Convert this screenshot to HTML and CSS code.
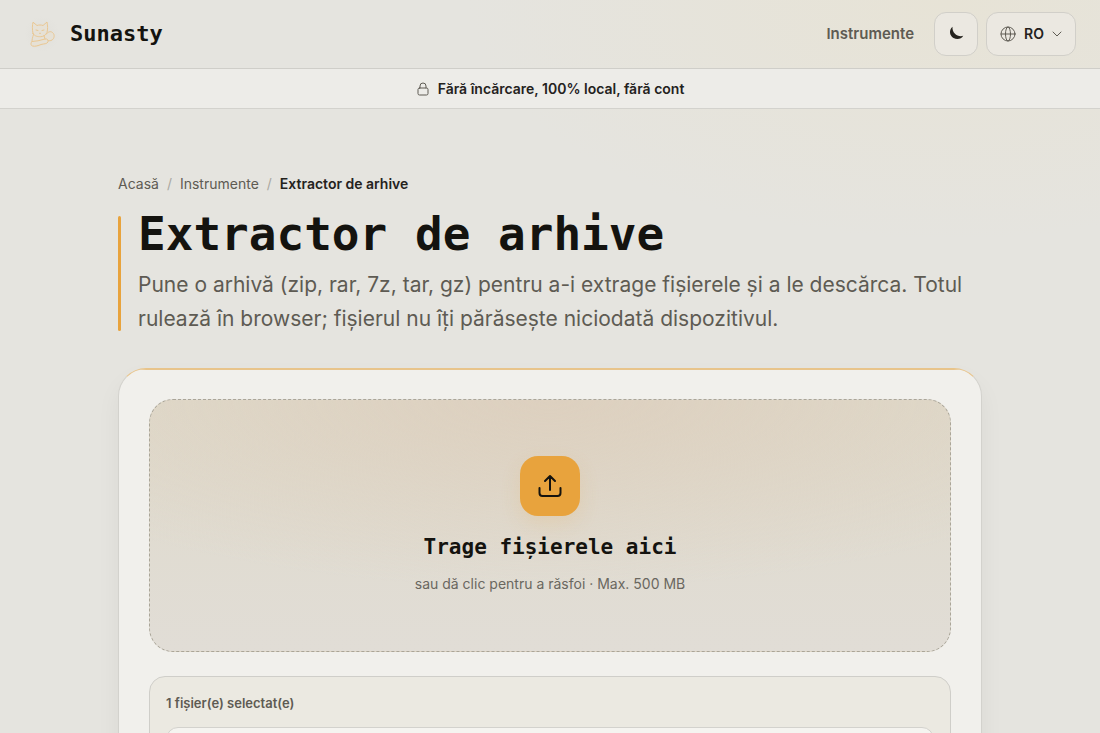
FILE: index.html
```html
<!DOCTYPE html>
<html lang="ro">
<head>
    <meta charset="UTF-8">
    <meta name="viewport" content="width=device-width, initial-scale=1.0">
    <title>Extractor de arhive</title>
    <link rel="stylesheet" href="styles.css">
</head>
<body>
    <header class="header">
        <a class="brand" href="#">
            <svg class="brand-logo" viewBox="0 0 36 36" aria-hidden="true">
                <path class="brand-fill" d="M9 17.500C8 13 8.300 9 9 6.200l4 3.300c2-.7 4-.7 6 0l4-3.500c.8 4 .8 7 0 10.500l5 0c3 2 2.500 6 0 8l-4.500 1c0 2.500-2 3-5 3.500-3 1-6 3-9 2-2-.5-2-3-.5-4.500 0-2 .5-4 1.500-7z"/>
                <path d="M9 17.500C8 13 8.300 9 9 6.200l4 3.300c2-.7 4-.7 6 0l4-3.500c.8 4 .8 7 0 10.500-1.500 3-4 4.200-6.500 4.200S10.500 20.500 9 17.500z"/>
                <path d="M12 14l2 .5M20 14l-2 .5M15.500 17.300h1"/>
                <path d="M9.500 18.500c-1 3-1.500 5-1.500 7-1.500 1.500-1.500 4 .5 4.500 2.500.8 6-.5 8.500-1.500 3-.8 6-.5 7-2.500.8-2-1-3.500-3-3l-7 1.800c-2 .5-4 .2-6 .7"/>
                <path d="M22.500 18c1-2 4-3.200 6-1.500 2.500 2 2 6-.5 7.500-1.500 1-3 .8-4 .5M20 19.500l1 3.500"/>
            </svg>
            <span class="brand-name">Sunasty</span>
        </a>
        <nav class="nav">
            <a class="nav-link" href="#">Instrumente</a>
            <div class="nav-actions">
                <button class="theme-button" type="button" aria-label="Mod întunecat">
                    <svg class="icon-moon" viewBox="0 0 16 16" aria-hidden="true">
                        <path d="M4.500 .8C.8 4 1.300 9.500 5.500 12c3.500 2 8 1 9.700-2.200C10 11.300 3.800 7.500 4.500 .8z"/>
                    </svg>
                </button>
                <label class="language">
                    <svg class="icon-globe" viewBox="0 0 16 16" aria-hidden="true">
                        <circle cx="8" cy="8" r="7"/>
                        <ellipse cx="8" cy="8" rx="2.500" ry="7"/>
                        <path d="M1 8h14"/>
                    </svg>
                    <select class="language-select" aria-label="Limbă">
                        <option selected>RO</option>
                    </select>
                    <svg class="icon-chevron" viewBox="0 0 10 10" aria-hidden="true">
                        <path d="M1 3l4 4 4-4"/>
                    </svg>
                </label>
            </div>
        </nav>
    </header>

    <div class="notice">
        <svg class="icon-lock" viewBox="0 0 14 14" aria-hidden="true">
            <rect x="2" y="6" width="10" height="7" rx="1.500"/>
            <path d="M4 6V4a3 3 0 0 1 6 0v2"/>
        </svg>
        <span>Fără încărcare, 100% local, fără cont</span>
    </div>

    <main class="main">
        <nav class="breadcrumb">
            <a href="#">Acasă</a>
            <span class="separator">/</span>
            <a href="#">Instrumente</a>
            <span class="separator">/</span>
            <span class="current">Extractor de arhive</span>
        </nav>

        <div class="hero">
            <h1 class="hero-title">Extractor de arhive</h1>
            <p class="hero-text">Pune o arhivă (zip, rar, 7z, tar, gz) pentru a-i extrage fișierele și a le descărca. Totul rulează în browser; fișierul nu îți părăsește niciodată dispozitivul.</p>
        </div>

        <section class="card">
            <label class="dropzone">
                <input class="dropzone-input" type="file">
                <span class="dropzone-icon">
                    <svg viewBox="0 0 24 24" aria-hidden="true">
                        <path d="M12 16V2M7 7l5-5 5 5M1.500 14v5a3 3 0 0 0 3 3h15a3 3 0 0 0 3-3v-5"/>
                    </svg>
                </span>
                <span class="dropzone-title">Trage fișierele aici</span>
                <span class="dropzone-text">sau dă clic pentru a răsfoi · Max. 500 MB</span>
            </label>

            <div class="files">
                <p class="files-title">1 fișier(e) selectat(e)</p>
                <ul class="files-list">
                    <li class="file"></li>
                </ul>
            </div>
        </section>
    </main>
</body>
</html>
```
FILE: styles.css
```css
* {
    box-sizing: border-box;
}

body {
    margin: 0;
    min-height: 100vh;
    font-family: Inter, "Liberation Sans", sans-serif;
    font-size: 14px;
    line-height: 20px;
    color: #24221d;
    background: radial-gradient(ellipse 480px 240px at 86% 0, #e7e3d6, rgba(231, 227, 214, 0)) no-repeat #e5e4df;
}

a {
    color: inherit;
    text-decoration: none;
}

svg {
    display: block;
    fill: none;
    stroke: currentColor;
    stroke-linecap: round;
    stroke-linejoin: round;
}

.header {
    display: flex;
    justify-content: space-between;
    align-items: center;
    padding: 12px 24px;
    border-bottom: 1px solid #cfcec9;
}

.brand {
    display: flex;
    align-items: center;
    gap: 10px;
}

.brand-logo {
    width: 36px;
    height: 36px;
    color: #e9c793;
    stroke-width: 1;
    border-radius: 50%;
    background: radial-gradient(circle, #e0dfda, rgba(224, 223, 218, 0) 70%);
}

.brand-fill {
    fill: #e6e1d6;
    stroke: none;
}

.brand-name {
    font-family: "DejaVu Sans Mono", monospace;
    font-size: 22px;
    font-weight: 700;
    line-height: 28px;
    color: #14130f;
}

.nav {
    display: flex;
    align-items: center;
    gap: 20px;
}

.nav-link {
    font-size: 15px;
    font-weight: 600;
    color: #5e5b53;
}

.nav-actions {
    display: flex;
    gap: 8px;
}

.theme-button,
.language {
    display: flex;
    justify-content: center;
    align-items: center;
    height: 44px;
    border: 1px solid #d1cfc9;
    border-radius: 12px;
    background-color: #ebe8e1;
    cursor: pointer;
}

.theme-button {
    width: 44px;
    padding: 0;
    color: #24221d;
}

.icon-moon {
    width: 16px;
    height: 16px;
    fill: currentColor;
    stroke: none;
}

.language {
    gap: 8px;
    padding: 0 13px;
}

.icon-globe {
    width: 16px;
    height: 16px;
    color: #5e5b53;
}

.language-select {
    appearance: none;
    padding: 0;
    border: 0;
    background: none;
    font-family: inherit;
    font-size: 14px;
    font-weight: 600;
    line-height: 20px;
    color: #24221d;
}

.icon-chevron {
    width: 10px;
    height: 10px;
    color: #5e5b53;
}

.notice {
    display: flex;
    justify-content: center;
    align-items: center;
    gap: 8px;
    height: 40px;
    border-bottom: 1px solid #d3d2cd;
    background-color: #edece8;
    font-weight: 600;
}

.icon-lock {
    width: 14px;
    height: 14px;
    color: #5e5b53;
}

.main {
    max-width: 912px;
    margin: 0 auto;
    padding: 65px 24px 48px;
}

.breadcrumb {
    display: flex;
    gap: 8px;
    margin-bottom: 16px;
    color: #5e5b53;
}

.separator {
    color: #aaa8a1;
}

.current {
    font-weight: 600;
    color: #24221d;
}

.hero {
    position: relative;
    padding-left: 20px;
    margin-bottom: 32px;
}

.hero::before {
    content: "";
    position: absolute;
    top: 6px;
    bottom: 5px;
    left: 0;
    width: 3px;
    border-radius: 2px;
    background-color: #e8a33d;
}

.hero-title {
    margin: 0 0 10px;
    font-family: "DejaVu Sans Mono", monospace;
    font-size: 46px;
    font-weight: 700;
    line-height: 48px;
    color: #14130f;
}

.hero-text {
    margin: 0;
    font-size: 21px;
    line-height: 34px;
    color: #5e5b53;
}

.card {
    position: relative;
    overflow: hidden;
    padding: 30px;
    border: 1px solid #d3d2cd;
    border-top-color: #e8c48b;
    border-radius: 28px;
    background-color: #f1f0ec;
    box-shadow: 0 12px 24px rgba(40, 36, 24, 0.05);
}

.card::before {
    content: "";
    position: absolute;
    top: 0;
    left: 0;
    right: 0;
    height: 1px;
    background-color: #e8c48b;
}

.dropzone {
    display: flex;
    flex-direction: column;
    align-items: center;
    padding: 56px 24px;
    border: 1px dashed #aaa598;
    border-radius: 24px;
    background: radial-gradient(ellipse 75% 75% at 50% 0, #ddd0bf, rgba(221, 208, 191, 0)), linear-gradient(#dfdacb, #e1ddd6);
    text-align: center;
    cursor: pointer;
}

.dropzone-input {
    position: absolute;
    width: 1px;
    height: 1px;
    opacity: 0;
}

.dropzone-icon {
    display: flex;
    justify-content: center;
    align-items: center;
    width: 60px;
    height: 60px;
    margin-bottom: 17px;
    border-radius: 18px;
    background-color: #e8a33d;
    box-shadow: 0 8px 20px rgba(232, 163, 61, 0.16);
    color: #14130f;
}

.dropzone-icon svg {
    width: 24px;
    height: 24px;
    stroke-width: 2;
}

.dropzone-title {
    margin-bottom: 12px;
    font-family: "DejaVu Sans Mono", monospace;
    font-size: 21px;
    font-weight: 700;
    line-height: 28px;
    color: #14130f;
}

.dropzone-text {
    font-size: 14px;
    line-height: 22px;
    color: #6a675f;
}

.files {
    margin-top: 24px;
    padding: 16px;
    border: 1px solid #cfcec9;
    border-radius: 16px;
    background-color: #ebe9e1;
}

.files-title {
    margin: 0 0 14px;
    font-size: 13px;
    font-weight: 600;
    color: #5e5b53;
}

.files-list {
    margin: 0;
    padding: 0;
    list-style: none;
}

.file {
    min-height: 56px;
    border: 1px solid #d3d2cd;
    border-radius: 12px;
    background-color: #f5f4f0;
}
```
